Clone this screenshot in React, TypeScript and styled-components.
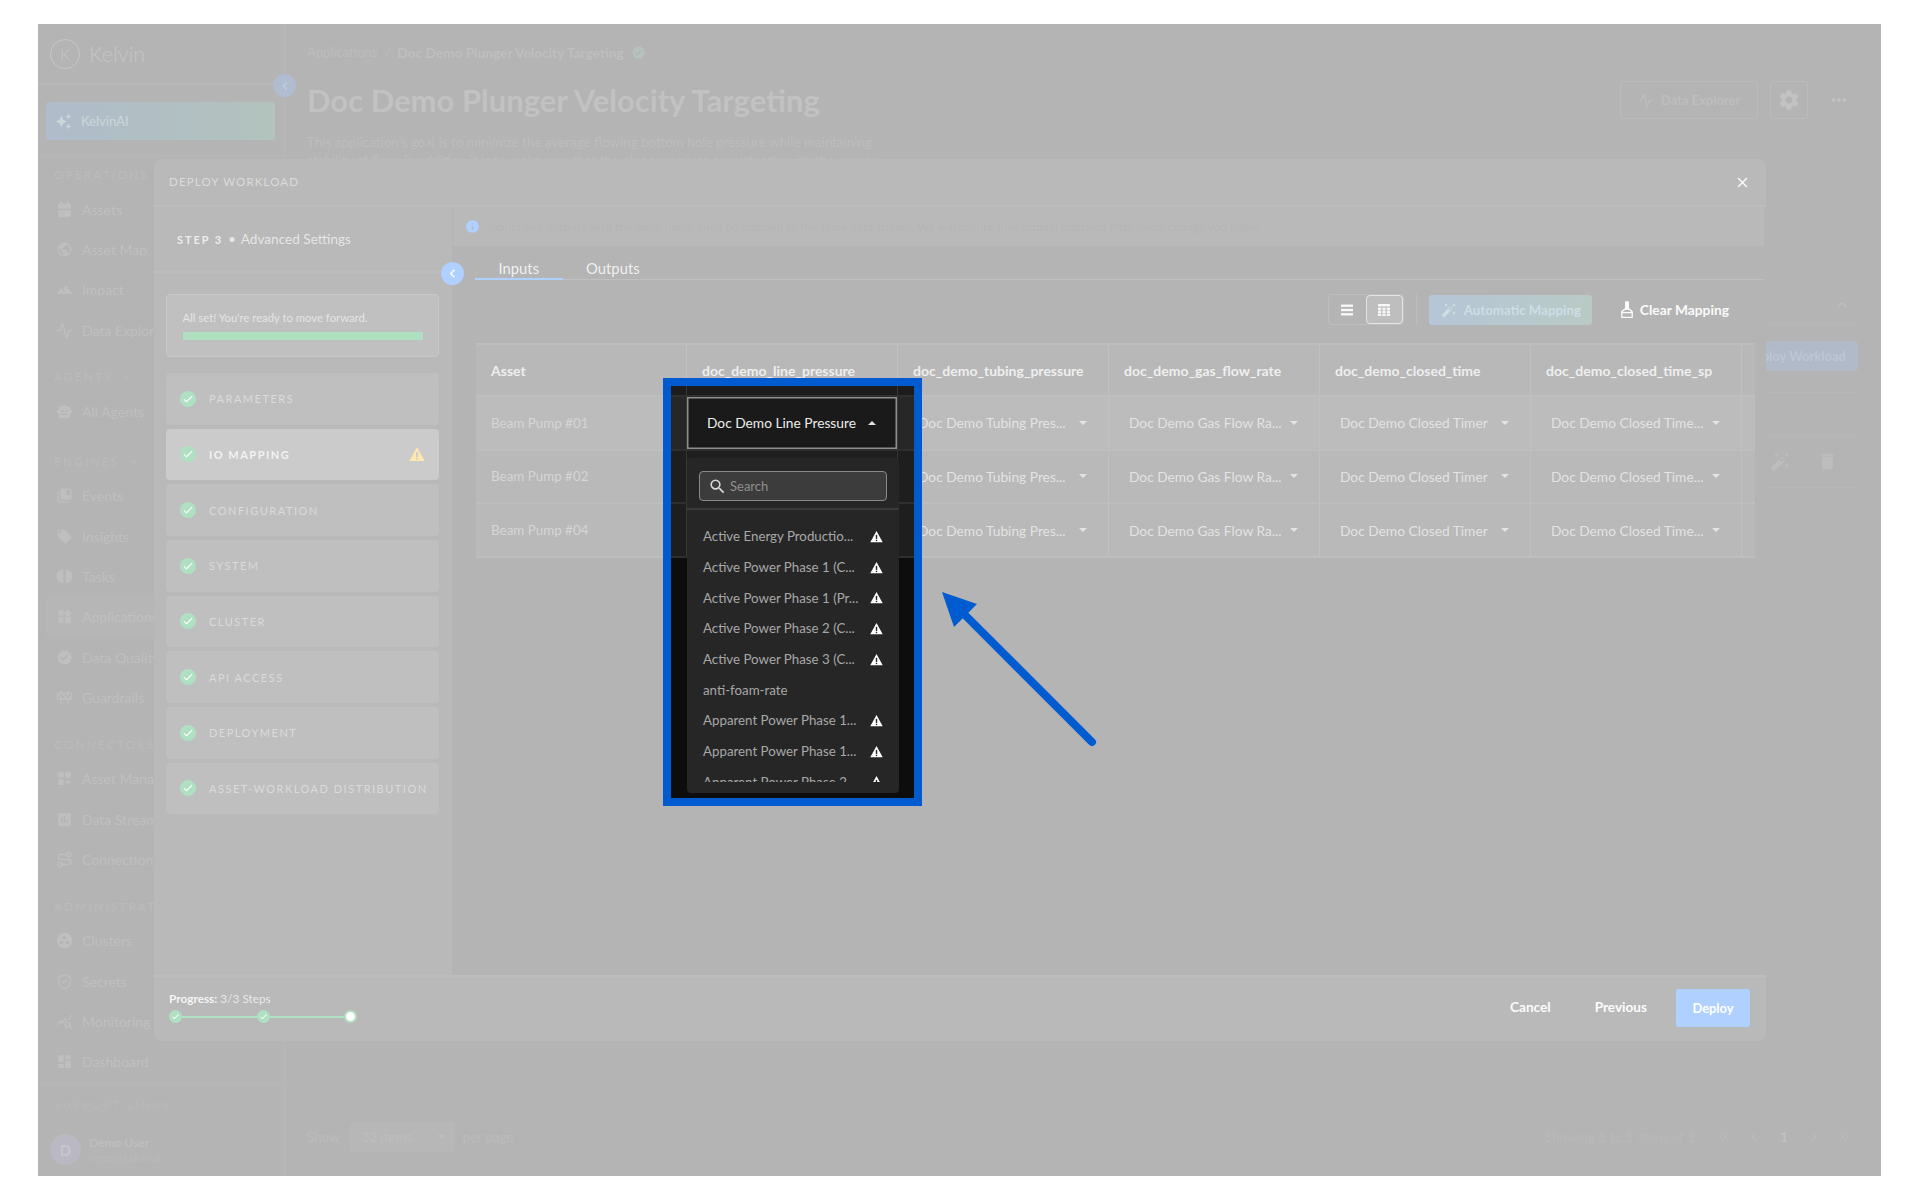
import React from "react";
import styled, { createGlobalStyle } from "styled-components";
import {
  MdPublic, MdLandscape, MdSmartToy, MdCollectionsBookmark, MdLocalOffer, MdWidgets, MdVerified,
  MdDashboardCustomize, MdInsertChart, MdQueryStats, MdDashboard, MdSettings,
  MdAutoFixHigh, MdDelete, MdAutoAwesome, MdInfo, MdCheck, MdClose,
  MdChevronLeft, MdExpandMore, MdExpandLess, MdSearch, MdMoreHoriz, MdChevronRight, MdKeyboardDoubleArrowLeft, MdKeyboardDoubleArrowRight,
} from "react-icons/md";
import { Activity, Construction, Route, ShieldCheck } from "lucide-react";

const Global = createGlobalStyle`
  html, body { margin: 0; padding: 0; background: #fff; }
  body { padding: 24px 39px 24px 38px; font-family: "Lato", "Open Sans", sans-serif; }
  * { box-sizing: border-box; }
`;

const Frame = styled.div`
  position: relative; width: 1843px; height: 1152px; overflow: hidden; background: #0d0d0d;
  display: grid; grid-template-columns: 247px 1fr;
`;

/* ---------- page behind the dialog ---------- */
const Sidebar = styled.aside`
  display: flex; flex-direction: column; height: 1152px; border-right: 1px solid #1d1d1d; position: relative;
`;
const LogoRow = styled.div`
  height: 61px; display: flex; align-items: center; gap: 9px; padding-left: 12px; border-bottom: 2px solid #1a1a1a; flex: none;
`;
const LogoMark = styled.span`
  width: 30px; height: 30px; border: 1px solid #4a4a4a; border-radius: 50%; display: flex; align-items: center;
  justify-content: center; color: #4a4a4a; font-size: 16px; font-weight: 300;
`;
const LogoWord = styled.span` color: #4a4a4a; font-size: 21.5px; font-weight: 300; `;
const SideCollapse = styled.span`
  position: absolute; right: -12px; top: 50px; width: 23px; height: 23px; border-radius: 50%; background: #002764;
  color: #3d5f90; display: flex; align-items: center; justify-content: center; font-size: 16px; z-index: 1;
`;
const AiBlock = styled.div` padding: 17px 9px 15px 8px; border-bottom: 1px solid #1a1a1a; flex: none; `;
const AiButton = styled.div`
  height: 38px; border-radius: 3px; display: flex; align-items: center; gap: 9px; padding-left: 9px; font-size: 13px;
  background: linear-gradient(90deg, #002757 0%, #0a3d2a 100%); color: #5f7f86;
  svg { font-size: 17px; }
`;
const Nav = styled.nav` flex: 1; overflow: hidden; margin-top: -2px; `;
const Section = styled.section<{ $tail?: number }>` padding: 12px 0 ${(p) => p.$tail ?? 6}px; `;
const SectionLabel = styled.div`
  height: 18px; line-height: 18px; margin-bottom: 5px; padding-left: 16px; font-size: 11.5px; letter-spacing: 2.4px;
  color: #262626; text-transform: uppercase; display: flex; align-items: center; gap: 8px; white-space: nowrap;
`;
const NavItem = styled.div<{ $active?: boolean }>`
  height: 40.33px; display: flex; align-items: center; gap: 9px; margin-left: 8px; padding-left: 10px; font-size: 14px;
  color: #333; background: ${(p) => (p.$active ? "#161616" : "transparent")}; border-radius: 3px; white-space: nowrap;
  svg { font-size: 17px; flex: none; color: #303030; }
`;
const SideFoot = styled.div` height: 93px; flex: none; border-top: 1px solid #1a1a1a; padding: 11px 0 0 16px; `;
const FootLabel = styled.div`
  font-size: 11.5px; letter-spacing: 2.4px; color: #1e1e1e; height: 18px; display: flex; align-items: center; gap: 9px;
`;
const UserRow = styled.div` display: flex; gap: 8px; margin: 21px 0 0 -4px; align-items: center; `;
const Avatar = styled.div`
  width: 31px; height: 31px; border-radius: 50%; background: #201c3c; color: #4c4866; display: flex;
  align-items: center; justify-content: center; font-size: 15px; font-weight: 700;
`;
const UserText = styled.div` display: flex; flex-direction: column; gap: 2px; `;
const UserName = styled.span` font-size: 12px; font-weight: 700; color: #2e2e2e; `;
const UserMail = styled.span` font-size: 10.5px; color: #222; `;

const Main = styled.main`
  display: flex; flex-direction: column; height: 1152px; padding: 0 23px 24px 22px; min-width: 0;
`;
const Crumbs = styled.div`
  height: 16px; margin-top: 20px; display: flex; align-items: center; gap: 7px; font-size: 13px; color: #2a2a2a;
  b { font-weight: 700; color: #303030; font-size: 13.7px; }
  svg { color: #163a28; font-size: 15px; }
`;
const TitleRow = styled.div` display: flex; justify-content: space-between; align-items: center; margin-top: 20px; height: 40px; `;
const Title = styled.h1` margin: 0; font-size: 31px; font-weight: 700; color: #3a3a3a; line-height: 40px; `;
const Actions = styled.div` display: flex; align-items: center; gap: 12px; `;
const GhostBtn = styled.div`
  height: 38px; width: 138px; border: 1px solid #242424; border-radius: 3px; display: flex; align-items: center;
  justify-content: center; gap: 8px; font-size: 13px; font-weight: 700; color: #2e2e2e;
  svg { color: #2e2e2e; }
`;
const GearBtn = styled.div`
  width: 38px; height: 38px; border: 1px solid #242424; border-radius: 3px; display: flex; align-items: center;
  justify-content: center; font-size: 24px; color: #3c3c3c;
`;
const Dots = styled.div` width: 38px; display: flex; justify-content: center; font-size: 22px; color: #3c3c3c; `;
const Description = styled.p` margin: 13px 0 0; width: 590px; font-size: 13.4px; line-height: 18px; color: #2a2a2a; `;
const BackPanel = styled.div` margin-top: 100px; display: flex; flex-direction: column; `;
const PanelTop = styled.div`
  height: 37px; border-bottom: 1px solid #1a1a1a; display: flex; justify-content: flex-end; align-items: center; padding-right: 6px;
  font-size: 20px; color: #2e2e2e;
`;
const PanelAction = styled.div` display: flex; justify-content: flex-end; margin-top: 17px; `;
const DeployWorkload = styled.div`
  width: 170px; height: 30px; border-radius: 3px; background: #002050; color: #2c4a76; font-size: 13px; font-weight: 700;
  display: flex; align-items: center; justify-content: flex-end; padding-right: 12px;
`;
const BackHead = styled.div` height: 44px; margin-top: 21px; border-top: 1px solid #1a1a1a; border-bottom: 1px solid #1a1a1a; `;
const BackRow = styled.div`
  height: 52px; border-bottom: 1px solid #1a1a1a; display: flex; justify-content: flex-end; align-items: center; gap: 26px; padding-right: 20px;
  font-size: 21px; color: #2c2c2c;
`;
const PageFoot = styled.div` margin-top: auto; height: 30px; display: flex; align-items: center; font-size: 13.4px; color: #262626; `;
const PerPage = styled.div`
  width: 105px; height: 30px; margin: 0 8px 0 10px; background: #181818; border-radius: 3px; display: flex; align-items: center;
  justify-content: space-between; padding: 0 10px 0 12px; color: #2c2c2c;
`;
const Pager = styled.div` margin-left: auto; display: flex; align-items: center; gap: 12px; padding-right: 5px; color: #1e1e1e; font-size: 18px; `;
const PagerText = styled.span` font-size: 13.4px; margin-right: 8px; color: #1e1e1e; `;
const PagerNum = styled.b` font-size: 13px; color: #3a3a3a; width: 18px; text-align: center; `;
const SmallCaret = styled.span<{ $up?: boolean; $c?: string }>`
  display: inline-block; flex: none; width: 0; height: 0; border-left: 4px solid transparent; border-right: 4px solid transparent;
  ${(p) => (p.$up ? `border-bottom: 4px solid ${p.$c ?? "#e0e0e0"};` : `border-top: 4px solid ${p.$c ?? "#a8a8a8"};`)}
`;

/* ---------- dialog ---------- */
const Modal = styled.div`
  position: absolute; left: 116px; top: 135px; width: 1612px; height: 882px; display: flex; flex-direction: column;
  background: #0d0d0d; border-radius: 8px; z-index: 2;
`;
const ModalHead = styled.header`
  height: 48px; flex: none; background: #1d1d1d; border-radius: 8px 8px 0 0; border-bottom: 2px solid #2a2a2a;
  display: flex; justify-content: space-between; align-items: center; padding: 0 15px;
`;
const ModalTitle = styled.span` font-size: 11.5px; letter-spacing: 1.15px; color: #8c8c8c; font-weight: 400; margin-top: -1px; `;
const CloseIcon = styled.span` color: #f0f0f0; display: flex; font-size: 17px; `;
const ModalBody = styled.div` flex: 1; display: flex; min-height: 0; `;
const Steps = styled.div` width: 298px; flex: none; background: #1d1d1d; display: flex; flex-direction: column; position: relative; `;
const StepHead = styled.div`
  height: 66px; flex: none; border-bottom: 2px solid #2a2a2a; display: flex; align-items: center; padding: 0 0 0 23px; gap: 5px;
  font-size: 13.6px; color: #b0b0b0;
`;
const StepNum = styled.b` font-size: 11px; letter-spacing: 1.9px; color: #c4c4c4; font-weight: 700; `;
const CollapseBtn = styled.span`
  position: absolute; right: -12px; top: 55px; width: 23px; height: 23px; border-radius: 50%; background: #0067ff; color: #fff;
  display: flex; align-items: center; justify-content: center; font-size: 17px; z-index: 3;
`;
const StepList = styled.div` padding: 21px 13px 0 12px; display: flex; flex-direction: column; gap: 4px; `;
const StatusCard = styled.div`
  height: 63px; margin-bottom: 12px; background: #363636; border: 1px solid #4d4d4d; border-radius: 4px; padding: 16px 15px 0 15.5px;
  font-size: 11.3px; color: #aaa;
`;
const StatusBar = styled.div` height: 8px; margin-top: 8px; background: #009b3a; border-radius: 1px; `;
const StepCard = styled.div<{ $active?: boolean }>`
  height: 51.67px; border-radius: 4px; background: ${(p) => (p.$active ? "#575757" : "#303030")}; display: flex; align-items: center;
  padding: 0 14px; gap: 13px; font-size: 11px; letter-spacing: 1.5px; color: ${(p) => (p.$active ? "#d8d8d8" : "#8c8c8c")};
  font-weight: ${(p) => (p.$active ? 700 : 400)}; white-space: nowrap;
`;
const CheckDot = styled.span`
  width: 16px; height: 16px; border-radius: 50%; background: #009b3a; color: #fff; flex: none; display: flex;
  align-items: center; justify-content: center; font-size: 12px;
`;
const WarnSlot = styled.span` margin-left: auto; display: flex; `;

const Content = styled.div` flex: 1; min-width: 0; display: flex; flex-direction: column; `;
const InfoBar = styled.div`
  height: 39px; flex: none; margin: 0 2px 0 1px; background: #1f1f1f; display: flex; align-items: center; gap: 8px; padding-left: 12px;
  font-size: 11.86px; color: #0f0f0f; white-space: nowrap;
  svg { color: #0067ff; font-size: 15px; flex: none; }
`;
const Tabs = styled.div` flex: none; margin: 0 3px 0 23px; height: 34px; padding-top: 10px; display: flex; border-bottom: 1px solid #353535; `;
const Tab = styled.div<{ $active?: boolean }>`
  height: 24px; padding: 0 23.5px; font-size: 14.8px; line-height: 25px; color: #d0d0d0; position: relative;
  border-bottom: ${(p) => (p.$active ? "2px solid #0067ff" : "0")};
`;
const Toolbar = styled.div` flex: none; height: 31px; margin: 14px 37px 0 0; display: flex; justify-content: flex-end; align-items: center; `;
const Toggle = styled.div` width: 76px; height: 31px; display: flex; border: 1px solid #2e2e2e; border-radius: 4px; `;
const ToggleBtn = styled.span<{ $active?: boolean }>`
  flex: 1; display: flex; align-items: center; justify-content: center; color: #e0e0e0; border-radius: 4px;
  ${(p) => (p.$active ? "background:#2d2d2d; outline: 1.5px solid #aaa; outline-offset: -1px;" : "")}
`;
const ToolDivider = styled.span` width: 1px; height: 31px; background: #2a2a2a; margin: 0 12px; `;
const AutoBtn = styled.div`
  width: 163px; height: 30px; border-radius: 3px; background: linear-gradient(90deg, #13477f 0%, #1e5546 100%); color: #5f95a8;
  display: flex; align-items: center; gap: 7px; padding-left: 12px; font-size: 13.3px; font-weight: 700;
  svg { font-size: 16px; flex: none; }
`;
const ClearBtn = styled.div`
  margin-left: 28px; display: flex; align-items: center; gap: 6px; font-size: 13.8px; font-weight: 700; color: #eee;
`;
const TableWrap = styled.div` margin: 18px 11px 0 24px; border-top: 2px solid #2a2a2a; `;
const Row = styled.div<{ $head?: boolean; $hover?: boolean }>`
  display: grid; grid-template-columns: repeat(6, 211px) 13px; height: ${(p) => (p.$head ? "52px" : "53.67px")};
  background: ${(p) => (p.$head ? "#1c1c1c" : p.$hover ? "#272727" : "#1e1e1e")}; border-bottom: 2px solid #2f2f2f;
`;
const HeadCell = styled.div`
  display: flex; align-items: center; padding-left: 15px; border-right: 1px solid #383838; font-size: 14px; font-weight: 700; color: #cacaca;
  &:last-child { border-right: 0; }
`;
const NameCell = styled.div` display: flex; align-items: center; padding-left: 15px; border-right: 1px solid #383838; font-size: 13.4px; color: #7b7b7b; `;
const Cell = styled.div<{ $open?: boolean }>`
  position: relative; display: flex; align-items: center; border-right: 1px solid #383838; padding: 0 21px 0 20px; gap: 6px;
  font-size: 13.75px; color: ${(p) => (p.$open ? "#ececec" : "#a6a6a6")};
  ${(p) => (p.$open ? "background:#1a1a1a; box-shadow: inset 0 0 0 1.5px #8e8e8e; z-index: 2;" : "")}
  &:last-child { border-right: 0; }
`;
const CellValue = styled.span` flex: 1; white-space: nowrap; overflow: hidden; `;
const Menu = styled.div`
  position: absolute; left: 0; top: 61px; width: 212px; height: 335px; background: #262626; border-radius: 4px; z-index: 4;
`;
const MenuSearch = styled.div` height: 52px; padding: 13px 12px 0; border-bottom: 2px solid #3a3a3a; `;
const SearchBox = styled.div`
  height: 30px; background: #3c3c3c; border: 1.5px solid #8a8a8a; border-radius: 4px; display: flex; align-items: center; gap: 3px;
  padding-left: 8px; font-size: 13px; color: #8f8f8f;
  svg { font-size: 19px; color: #d8d8d8; }
`;
const MenuList = styled.div` height: 272px; overflow: hidden; padding-top: 11px; `;
const MenuItem = styled.div`
  height: 30.7px; display: flex; align-items: center; justify-content: space-between; padding: 0 16px 0 16px;
  font-size: 13.3px; color: #a8a8a8; white-space: nowrap;
`;

const FootBar = styled.footer`
  height: 66px; flex: none; background: #1d1d1d; border-top: 2px solid #2a2a2a; border-radius: 0 0 8px 8px; display: flex;
  align-items: center; justify-content: space-between; padding: 0 16px 2px 15px;
`;
const Progress = styled.div` display: flex; flex-direction: column; gap: 4px; `;
const ProgressText = styled.div` font-size: 11.8px; margin-top: -2px; color: #bbb; b { color: #ddd; font-weight: 700; } `;
const Track = styled.div` display: flex; align-items: center; margin-left: 0; `;
const TrackDot = styled.span<{ $current?: boolean }>`
  width: 13px; height: 13px; border-radius: 50%; flex: none; display: flex; align-items: center; justify-content: center; color: #fff; font-size: 9px;
  background: ${(p) => (p.$current ? "#fff" : "#009b3a")}; ${(p) => (p.$current ? "border: 2px solid #009b3a;" : "")}
`;
const TrackLine = styled.span` width: 74.5px; height: 2px; background: #009b3a; flex: none; `;
const FootActions = styled.div` display: flex; align-items: center; `;
const TextBtn = styled.span<{ $gap: number }>` font-size: 13.6px; font-weight: 700; color: #f4f4f4; margin-right: ${(p) => p.$gap}px; margin-top: -2px; `;
const DeployBtn = styled.span`
  width: 74px; height: 38px; border-radius: 3px; background: #0067ff; color: #fff; display: flex; align-items: center; justify-content: center;
  font-size: 12.9px; font-weight: 700;
`;

/* ---------- annotation on top ---------- */
const Spotlight = styled.div`
  position: absolute; left: 625px; top: 354px; width: 259px; height: 428px; border: 8px solid #005bd1; z-index: 10;
  box-shadow: 0 0 0 3000px rgba(255, 255, 255, 0.69);
`;
const ArrowMark = styled.svg` position: absolute; left: 900px; top: 560px; z-index: 11; `;

const Warn = ({ color = "#fff", mark = "#262626", size = 13 }: { color?: string; mark?: string; size?: number }) => (
  <svg width={size} height={size} viewBox="0 0 24 24">
    <path d="M12 2 L23.5 22.5 H.5 Z" fill={color} />
    <rect x="10.7" y="9" width="2.6" height="7.5" fill={mark} />
    <rect x="10.7" y="18" width="2.6" height="2.6" fill={mark} />
  </svg>
);
const Broom = () => (
  <svg width="14" height="18" viewBox="0 0 14 18" fill="none" stroke="#eee" strokeWidth="1.4">
    <rect x="5.7" y="1" width="2.6" height="7" fill="#eee" />
    <path d="M5 8h4l3.2 2.6V16.4H1.8V10.6Z" />
    <path d="M1.8 11.6h10.4" />
  </svg>
);
const ListGlyph = () => (
  <svg width="12" height="12" viewBox="0 0 12 12" fill="#e6e6e6">
    <rect x="0" y="0.5" width="12" height="2.4" /><rect x="0" y="4.8" width="12" height="2.4" /><rect x="0" y="9.1" width="12" height="2.4" />
  </svg>
);
const GridGlyph = () => (
  <svg width="12" height="12" viewBox="0 0 12 12" fill="#e6e6e6">
    <rect x="0" y="0" width="12" height="2.4" />
    {[3.6, 6.6, 9.6].flatMap((y) => [0, 4.4, 8.8].map((x) => <rect key={`${x}-${y}`} x={x} y={y} width="3.2" height="2.4" />))}
  </svg>
);
const AssetsGlyph = ({ size = 17 }: { size?: number }) => (
  <svg width={size} height={size} viewBox="0 0 24 24" fill="currentColor">
    <rect x="6" y="1" width="3" height="5" /><rect x="15" y="1" width="3" height="5" />
    <path d="M3 4h18v7H3z" /><path d="M3 13h18v8a2 2 0 0 1-2 2H5a2 2 0 0 1-2-2z" />
  </svg>
);
const TasksGlyph = ({ size = 17 }: { size?: number }) => (
  <svg width={size} height={size} viewBox="0 0 24 24" fill="currentColor">
    <path d="M10.5 2a10 10 0 0 0 0 20z" /><path d="M13.5 2a10 10 0 0 1 0 20z" />
  </svg>
);
const ClustersGlyph = ({ size = 17 }: { size?: number }) => (
  <svg width={size} height={size} viewBox="0 0 24 24">
    <circle cx="12" cy="12" r="11" fill="currentColor" />
    <circle cx="12" cy="8" r="2.4" fill="#0d0d0d" /><circle cx="7.8" cy="15" r="2.4" fill="#0d0d0d" /><circle cx="16.2" cy="15" r="2.4" fill="#0d0d0d" />
  </svg>
);

const sections = [
  { label: "Operations", chev: true, items: [[AssetsGlyph, "Assets"], [MdPublic, "Asset Map"], [MdLandscape, "Impact"], [Activity, "Data Explorer"]] },
  { label: "Agents", chev: true, tail: 9, items: [[MdSmartToy, "All Agents"]] },
  { label: "Engines", chev: true, items: [[MdCollectionsBookmark, "Events"], [MdLocalOffer, "Insights"], [TasksGlyph, "Tasks"], [MdWidgets, "Applications"], [MdVerified, "Data Quality"], [Construction, "Guardrails"]] },
  { label: "Connectors", items: [[MdDashboardCustomize, "Asset Manager"], [MdInsertChart, "Data Streams"], [Route, "Connections"]] },
  { label: "Administration", items: [[ClustersGlyph, "Clusters"], [ShieldCheck, "Secrets"], [MdQueryStats, "Monitoring"], [MdDashboard, "Dashboard"]] },
] as const;

const stepNames = ["Parameters", "IO Mapping", "Configuration", "System", "Cluster", "API Access", "Deployment", "Asset-Workload Distribution"];
const columns = ["doc_demo_line_pressure", "doc_demo_tubing_pressure", "doc_demo_gas_flow_rate", "doc_demo_closed_time", "doc_demo_closed_time_sp"];
const values = ["Doc Demo Line Pressure", "Doc Demo Tubing Pres...", "Doc Demo Gas Flow Ra...", "Doc Demo Closed Timer", "Doc Demo Closed Time..."];
const assets = ["Beam Pump #01", "Beam Pump #02", "Beam Pump #04"];
const options: [string, boolean][] = [
  ["Active Energy Productio...", true],
  ["Active Power Phase 1 (C...", true],
  ["Active Power Phase 1 (Pr...", true],
  ["Active Power Phase 2 (C...", true],
  ["Active Power Phase 3 (C...", true],
  ["anti-foam-rate", false],
  ["Apparent Power Phase 1...", true],
  ["Apparent Power Phase 1...", true],
  ["Apparent Power Phase 2...", true],
];

export default function App() {
  return (
    <>
      <Global />
      <Frame>
        <Sidebar>
          <LogoRow>
            <LogoMark>K</LogoMark>
            <LogoWord>Kelvin</LogoWord>
          </LogoRow>
          <SideCollapse><MdChevronLeft /></SideCollapse>
          <AiBlock>
            <AiButton><MdAutoAwesome />KelvinAI</AiButton>
          </AiBlock>
          <Nav>
            {sections.map((s) => (
              <Section key={s.label} $tail={"tail" in s ? s.tail : undefined}>
                <SectionLabel>{s.label}{"chev" in s && s.chev ? <MdExpandMore /> : null}</SectionLabel>
                {s.items.map(([Icon, name]) => (
                  <NavItem key={name} $active={name === "Applications"}>
                    <Icon size={17} />
                    {name}
                  </NavItem>
                ))}
              </Section>
            ))}
          </Nav>
          <SideFoot>
            <FootLabel>SUPPORT LINKS <MdChevronRight /></FootLabel>
            <UserRow>
              <Avatar>D</Avatar>
              <UserText>
                <UserName>Demo User</UserName>
                <UserMail>demo@kelvin.ai</UserMail>
              </UserText>
            </UserRow>
          </SideFoot>
        </Sidebar>

        <Main>
          <Crumbs>Applications <span>/</span> <b>Doc Demo Plunger Velocity Targeting</b><MdVerified /></Crumbs>
          <TitleRow>
            <Title>Doc Demo Plunger Velocity Targeting</Title>
            <Actions>
              <GhostBtn><Activity size={15} />Data Explorer</GhostBtn>
              <GearBtn><MdSettings /></GearBtn>
              <Dots><MdMoreHoriz /></Dots>
            </Actions>
          </TitleRow>
          <Description>
            This application's goal is to minimize the average flowing bottom hole pressure while maintaining
            stability of flow. In addition it is to make sure that the plunger arrives consistently with the proper velocity.
          </Description>
          <BackPanel>
            <PanelTop><MdExpandLess /></PanelTop>
            <PanelAction><DeployWorkload>Deploy Workload</DeployWorkload></PanelAction>
            <BackHead />
            <BackRow><MdAutoFixHigh /><MdDelete /></BackRow>
          </BackPanel>
          <PageFoot>
            Show
            <PerPage>32 items<SmallCaret $c="#2c2c2c" /></PerPage>
            per page
            <Pager>
              <PagerText>Showing 1 to 1 items of 1</PagerText>
              <MdKeyboardDoubleArrowLeft />
              <MdChevronLeft />
              <PagerNum>1</PagerNum>
              <MdChevronRight />
              <MdKeyboardDoubleArrowRight />
            </Pager>
          </PageFoot>
        </Main>

        <Modal>
          <ModalHead>
            <ModalTitle>DEPLOY WORKLOAD</ModalTitle>
            <CloseIcon><MdClose /></CloseIcon>
          </ModalHead>
          <ModalBody>
            <Steps>
              <StepHead><StepNum>STEP 3</StepNum> • <span>Advanced Settings</span></StepHead>
              <CollapseBtn><MdChevronLeft /></CollapseBtn>
              <StepList>
                <StatusCard>
                  All set! You're ready to move forward.
                  <StatusBar />
                </StatusCard>
                {stepNames.map((n) => (
                  <StepCard key={n} $active={n === "IO Mapping"}>
                    <CheckDot><MdCheck /></CheckDot>
                    {n.toUpperCase()}
                    {n === "IO Mapping" ? <WarnSlot><Warn color="#ffb000" mark="#575757" size={16} /></WarnSlot> : null}
                  </StepCard>
                ))}
              </StepList>
            </Steps>
            <Content>
              <InfoBar>
                <MdInfo />
                Inputs and outputs with the same name must be mapped to the same data stream. We will ensure they remain matched after every change you make.
              </InfoBar>
              <Tabs>
                <Tab $active>Inputs</Tab>
                <Tab>Outputs</Tab>
              </Tabs>
              <Toolbar>
                <Toggle>
                  <ToggleBtn><ListGlyph /></ToggleBtn>
                  <ToggleBtn $active><GridGlyph /></ToggleBtn>
                </Toggle>
                <ToolDivider />
                <AutoBtn><MdAutoFixHigh />Automatic Mapping</AutoBtn>
                <ClearBtn><Broom />Clear Mapping</ClearBtn>
              </Toolbar>
              <TableWrap>
                <Row $head>
                  <HeadCell>Asset</HeadCell>
                  {columns.map((c) => <HeadCell key={c}>{c}</HeadCell>)}
                  <HeadCell />
                </Row>
                {assets.map((a, r) => (
                  <Row key={a} $hover={r === 0}>
                    <NameCell>{a}</NameCell>
                    {values.map((v, c) => {
                      const open = r === 0 && c === 0;
                      return (
                        <Cell key={v} $open={open}>
                          <CellValue>{v}</CellValue>
                          <SmallCaret $up={open} />
                          {open ? (
                            <Menu>
                              <MenuSearch><SearchBox><MdSearch />Search</SearchBox></MenuSearch>
                              <MenuList>
                                {options.map(([o, warn], i) => (
                                  <MenuItem key={i}>{o}{warn ? <Warn /> : null}</MenuItem>
                                ))}
                              </MenuList>
                            </Menu>
                          ) : null}
                        </Cell>
                      );
                    })}
                    <Cell />
                  </Row>
                ))}
              </TableWrap>
            </Content>
          </ModalBody>
          <FootBar>
            <Progress>
              <ProgressText><b>Progress:</b> 3/3 Steps</ProgressText>
              <Track>
                <TrackDot><MdCheck /></TrackDot>
                <TrackLine />
                <TrackDot><MdCheck /></TrackDot>
                <TrackLine />
                <TrackDot $current />
              </Track>
            </Progress>
            <FootActions>
              <TextBtn $gap={44}>Cancel</TextBtn>
              <TextBtn $gap={29}>Previous</TextBtn>
              <DeployBtn>Deploy</DeployBtn>
            </FootActions>
          </FootBar>
        </Modal>

        <Spotlight />
        <ArrowMark width="165" height="170" viewBox="0 0 165 170">
          <path d="M4 8 L39 20 L16 43 Z" fill="#005bd1" />
          <path d="M27 31 L154 158" stroke="#005bd1" strokeWidth="8" strokeLinecap="round" />
        </ArrowMark>
      </Frame>
    </>
  );
}
